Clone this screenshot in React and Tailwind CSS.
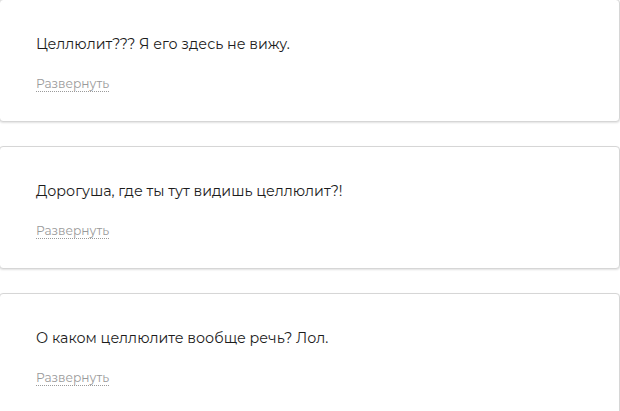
import React from "react";

const comments = [
  "Целлюлит??? Я его здесь не вижу.",
  "Дорогуша, где ты тут видишь целлюлит?!",
  "О каком целлюлите вообще речь? Лол.",
];

export default function App() {
  return (
    <div className="w-[620px] h-[411px] overflow-hidden bg-white" style={{ fontFamily: '"Montserrat", "Open Sans", "Noto Sans", sans-serif' }}>
      <div className="flex flex-col gap-[24px] mt-[-1px] ml-[-1px] w-[621px]">
        {comments.map((text, i) => (
          <div
            key={i}
            className="h-[123px] shrink-0 border border-[#d6d6d6] rounded-[4px] bg-white shadow-[0_1px_2px_rgba(0,0,0,0.12)] pl-[36px] pt-[35px]"
          >
            <p className="text-[14.3px] leading-[18px] text-[#1c1c1c]">{text}</p>
            <span className="inline-block mt-[23px] text-[12.2px] leading-[15px] text-[#9a9a9a] border-b border-dotted border-[#9a9a9a]">
              Развернуть
            </span>
          </div>
        ))}
      </div>
    </div>
  );
}
